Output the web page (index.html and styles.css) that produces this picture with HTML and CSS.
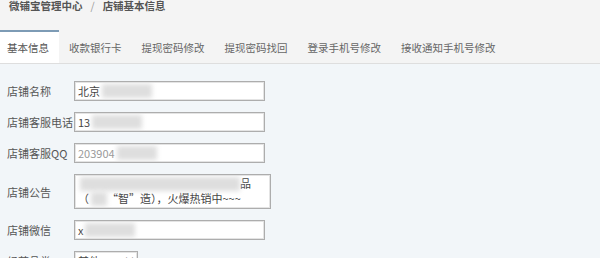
FILE: index.html
```html
<!DOCTYPE html>
<html lang="zh-CN">
<head>
  <meta charset="UTF-8" />
  <title>店铺基本信息</title>
  <link rel="stylesheet" href="styles.css">
</head>
<body>
  <div class="crumb">微铺宝管理中心<span class="sep">/</span>店铺基本信息</div>

  <ul class="tabs">
    <li class="active">基本信息</li>
    <li>收款银行卡</li>
    <li>提现密码修改</li>
    <li>提现密码找回</li>
    <li>登录手机号修改</li>
    <li>接收通知手机号修改</li>
  </ul>

  <div class="content">
    <div class="row">
      <label>店铺名称</label>
      <div class="field">北京<span class="mask w50"></span></div>
    </div>
    <div class="row">
      <label>店铺客服电话</label>
      <div class="field">13<span class="mask w50"></span></div>
    </div>
    <div class="row">
      <label>店铺客服QQ</label>
      <div class="field faded">203904<span class="mask w40"></span></div>
    </div>
    <div class="row">
      <label>店铺公告</label>
      <div class="field area">
        <div><span class="mask w160"></span>品</div>
        <div>（<span class="mask w16"></span>“智”造），火爆热销中~~~</div>
      </div>
    </div>
    <div class="row">
      <label>店铺微信</label>
      <div class="field">x<span class="mask w50"></span></div>
    </div>
    <div class="row">
      <label>经营品类</label>
      <div class="field select">其他<span class="chev">∨</span></div>
    </div>
  </div>
</body>
</html>
```

FILE: styles.css
```css
* {
  box-sizing: border-box;
}
body {
  margin: 0;
  height: 258px;
  background: #f4f4f4;
  font-family: "Noto Sans CJK SC", "Noto Sans", sans-serif;
  color: #444;
  overflow: hidden;
}
.crumb {
  padding: 0 9px;
  font-size: 10.5px;
  line-height: 11px;
  font-weight: 700;
  color: #555;
}
.crumb .sep {
  margin: 0 8px;
  font-weight: 400;
  color: #999;
}
.tabs {
  list-style: none;
  margin: 19px 0 0;
  padding: 0;
  display: flex;
  height: 34px;
  border-bottom: 1px solid #dedede;
}
.tabs li {
  padding: 0 10px;
  line-height: 31px;
  height: 33px;
  border-top: 2px solid transparent;
  font-size: 10.5px;
  color: #666;
}
.tabs li:first-child {
  padding-left: 7px;
}
.tabs li.active {
  background: #fff;
  border-top-color: #7d9bb5;
  color: #555;
}
.content {
  background: #f2f6f9;
  padding-top: 17px;
  height: 194px;
  overflow: hidden;
}
.row {
  display: flex;
  align-items: center;
  margin-bottom: 11px;
}
.row label {
  width: 74px;
  padding-left: 7px;
  font-size: 11px;
  color: #555;
  white-space: nowrap;
}
.field {
  width: 191px;
  height: 20px;
  background: #fff;
  border: 1px solid #adadad;
  box-shadow: inset 0 0 0 1px #e4e4e4;
  padding: 0 3px;
  font-size: 11px;
  line-height: 18px;
  color: #444;
  display: flex;
  align-items: center;
  white-space: nowrap;
  overflow: hidden;
}
.field.faded {
  color: #999;
}
.field.area {
  width: 197px;
  height: 35px;
  display: block;
  padding-top: 1px;
  line-height: 15px;
}
.field.area div {
  display: flex;
  align-items: center;
}
.field.select {
  width: 64px;
  justify-content: space-between;
}
.chev {
  color: #888;
  font-size: 9px;
}
.mask {
  display: inline-block;
  height: 14px;
  background: #dedede;
  filter: blur(2.5px);
  margin-left: 2px;
}
.w16 { width: 16px; }
.w40 { width: 40px; }
.w50 { width: 50px; }
.w160 { width: 160px; }
```
